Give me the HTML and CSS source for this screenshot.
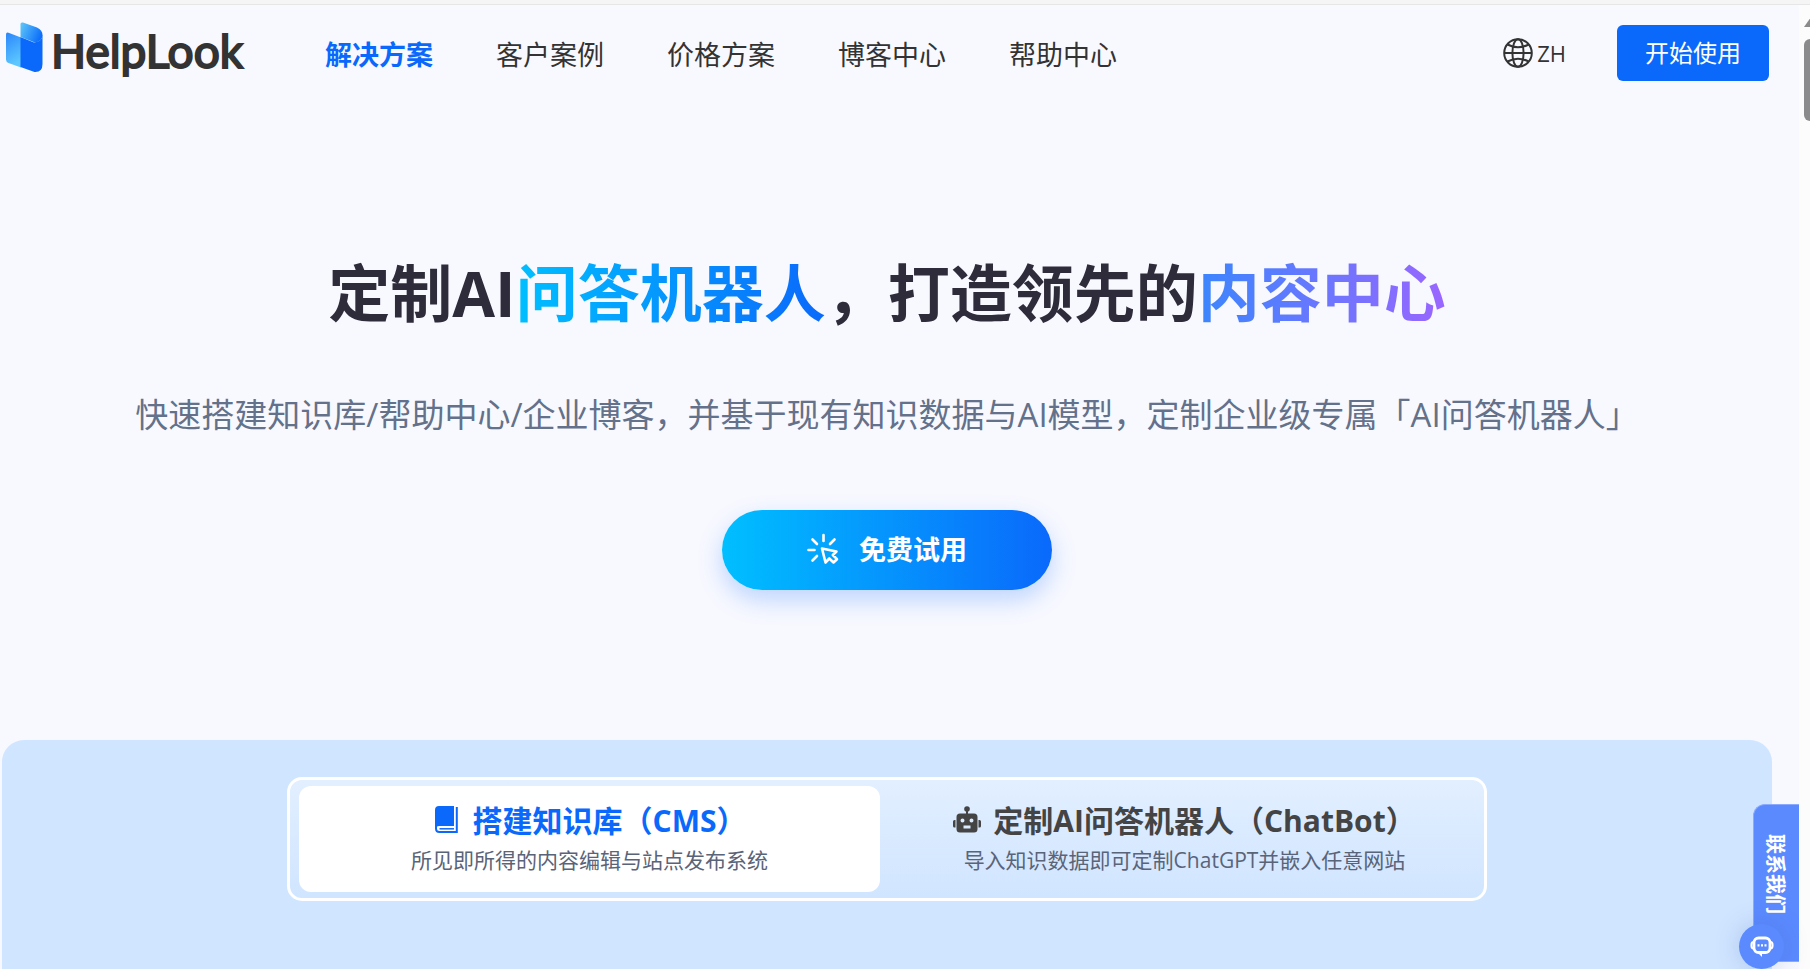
FILE: index.html
```html
<!DOCTYPE html>
<html lang="zh-CN">
<head>
  <meta charset="UTF-8" />
  <meta name="viewport" content="width=device-width, initial-scale=1.0"/>
  <title>HelpLook</title>
  <link rel="stylesheet" href="styles.css">
</head>
<body>

  <div class="top-line"></div>

  <div class="window">
    <div class="page">

      <header class="header">
        <a class="logo" href="#">
          <svg class="logo-icon" viewBox="0 0 37 51" aria-hidden="true">
            <defs>
              <linearGradient id="logoLeft" x1="0" y1="0" x2="0.3" y2="1">
                <stop offset="0" stop-color="#2b86fb"/>
                <stop offset="1" stop-color="#5cc8ff"/>
              </linearGradient>
              <linearGradient id="logoTop" x1="0" y1="0.2" x2="1" y2="0.6">
                <stop offset="0" stop-color="#5cc3f8"/>
                <stop offset="1" stop-color="#0a6cfb"/>
              </linearGradient>
            </defs>
            <path d="M0 12.5 Q0 10 2.5 10.8 L15 15.5 V45.5 L2.5 41 Q0 40 0 37.500 Z" fill="url(#logoLeft)"/>
            <path d="M14.500 15 L28 20.500 Q36.500 20 36.500 12 V42 Q36.500 50.500 28.500 50 L14.500 45 Z" fill="#0a69fb"/>
            <path d="M14.500 2 Q14.500 0 17 .6 L31 5.600 Q36.500 8 36.500 13.500 Q36 19.500 29 20.500 L14.500 15 Z" fill="url(#logoTop)"/>
          </svg>
          <span class="logo-text">HelpLook</span>
        </a>

        <nav class="nav">
          <a class="active" href="#">解决方案</a>
          <a href="#">客户案例</a>
          <a href="#">价格方案</a>
          <a href="#">博客中心</a>
          <a href="#">帮助中心</a>
        </nav>

        <button class="lang" type="button">
          <svg class="lang-icon" viewBox="0 0 30 30" fill="none" stroke="#333" stroke-width="2" aria-hidden="true">
            <circle cx="15" cy="15" r="13.8"/>
            <ellipse cx="15" cy="15" rx="5.600" ry="13.800"/>
            <path d="M1.200 15H28.800M4.500 6.500Q15 12 25.500 6.500M4.500 23.500Q15 18 25.500 23.500"/>
          </svg>
          ZH
        </button>
        <button class="start-btn" type="button">开始使用</button>
      </header>

      <section class="hero">
        <h1>定制AI<span class="blue-text">问答机器人</span>，打造领先的<span class="purple-text">内容中心</span></h1>
        <p>快速搭建知识库/帮助中心/企业博客，并基于现有知识数据与AI模型，定制企业级专属「AI问答机器人」</p>
        <button class="try-btn" type="button">
          <svg class="try-icon" viewBox="0 0 32 32" fill="none" stroke="#fff" stroke-width="2.6" stroke-linecap="round" stroke-linejoin="round" aria-hidden="true">
            <path d="M16.500 2V8M5.500 6.500L10 11M27.500 6.500L23 11M1.500 17H7.500M10 23L5.500 27.500"/>
            <path d="M15 15.500L29.500 18.500L25.800 22L30 26.200L26.500 29.500L22.300 25.500L18.500 29.500Z"/>
          </svg>
          免费试用
        </button>
      </section>

      <section class="panel">
        <div class="tabs" role="tablist">
          <button class="tab selected" type="button" role="tab" aria-selected="true">
            <span class="tab-title">
              <svg class="tab-icon" viewBox="0 0 26 28" fill="currentColor" aria-hidden="true">
                <path d="M5 0H20V20H5Q3 20 1 21.500V4Q1 0 5 0Z"/>
                <path d="M22.800 1V26H5.500Q2 26 2 22.500V20" fill="none" stroke="currentColor" stroke-width="2"/>
                <path d="M5.500 22.800H20" stroke="currentColor" stroke-width="1.500"/>
              </svg>
              搭建知识库（CMS）
            </span>
            <span class="tab-desc">所见即所得的内容编辑与站点发布系统</span>
          </button>
          <button class="tab" type="button" role="tab" aria-selected="false">
            <span class="tab-title">
              <svg class="tab-icon" viewBox="0 0 28 28" fill="currentColor" aria-hidden="true">
                <circle cx="14" cy="3" r="2.800"/>
                <path d="M13 4H15V9H13ZM0 15.500Q0 14 1.500 14H2.500V21.500H1.500Q0 21.500 0 20ZM25.500 14H26.500Q28 14 28 15.500V20Q28 21.500 26.500 21.500H25.500Z"/>
                <path fill-rule="evenodd" d="M7 7.500H21Q24.500 7.500 24.500 11V23Q24.500 26.500 21 26.500H7Q3.500 26.500 3.500 23V11Q3.500 7.500 7 7.500ZM9.500 12.500A2 2 0 1 0 9.500 16.500A2 2 0 1 0 9.500 12.500ZM18.500 12.500A2 2 0 1 0 18.500 16.500A2 2 0 1 0 18.500 12.500ZM10.500 19.500V22.500H17.500V19.500Z"/>
              </svg>
              定制AI问答机器人（ChatBot）
            </span>
            <span class="tab-desc">导入知识数据即可定制ChatGPT并嵌入任意网站</span>
          </button>
        </div>
      </section>

      <!-- floating contact button -->
      <button class="contact" type="button">联系我们</button>
      <button class="chat-bubble" type="button" aria-label="Chat">
        <svg class="chat-icon" viewBox="0 0 24 22" fill="none" stroke="#fff" stroke-width="2.800" aria-hidden="true">
          <rect x="4" y="2" width="16" height="14.500" rx="4.500"/>
          <path d="M3.500 6Q1.400 6 1.400 9.200Q1.400 12.500 3.500 12.500M20.500 6Q22.600 6 22.600 9.200Q22.600 12.500 20.500 12.500" stroke-width="2"/>
          <path d="M8 17H12V21Z" fill="#fff" stroke="none"/>
          <path d="M7.500 9.300H9.500M11 9.300H13M14.500 9.300H16.500" stroke-width="2.200"/>
        </svg>
      </button>
    </div>

    <div class="scrollbar">
      <span class="scroll-arrow"></span>
      <span class="scroll-thumb"></span>
    </div>
  </div>

</body>
</html>
```
FILE: styles.css
```css
* {
  box-sizing: border-box;
}

body {
  margin: 0;
  height: 100vh;
  display: flex;
  flex-direction: column;
  overflow: hidden;
  font-family: 'Open Sans', 'Noto Sans CJK SC', sans-serif;
  background: #f8f9ff;
  color: #333;
}

button {
  font-family: inherit;
  border: none;
  padding: 0;
  cursor: pointer;
}

a {
  color: inherit;
  text-decoration: none;
}

.top-line {
  height: 5px;
  flex: none;
  background: #f5f5f5;
  border-bottom: 1px solid #e6e6e6;
}

.window {
  flex: 1;
  display: flex;
  min-height: 0;
  overflow: hidden;
}

.page {
  position: relative;
  flex: 1;
  display: flex;
  flex-direction: column;
  padding: 0 27px 0 2px;
}

/* header */
.header {
  display: flex;
  align-items: center;
  height: 96px;
  padding: 0 3px 0 4px;
}

.logo {
  display: flex;
  align-items: center;
  gap: 8px;
  width: 319px;
}

.logo-icon {
  width: 37px;
  height: 51px;
  margin-bottom: 12px;
}

.logo-text {
  font-family: Lato, sans-serif;
  font-size: 46px;
  line-height: 56px;
  padding-bottom: 4px;
  color: #333;
  -webkit-text-stroke: 2px #333;
  stroke-linejoin: round;
}

.nav {
  display: flex;
  gap: 63px;
  padding-top: 3px;
  font-size: 27px;
  line-height: 40px;
}

.nav .active {
  color: #0a69fb;
  font-weight: bold;
}

.lang {
  display: flex;
  align-items: center;
  gap: 4px;
  margin-left: auto;
  margin-right: 51px;
  background: none;
  color: #333;
  font-size: 22px;
}

.lang-icon {
  width: 30px;
  height: 30px;
}

.start-btn {
  width: 152px;
  height: 56px;
  padding-bottom: 3px;
  border-radius: 6px;
  background: #0a69fb;
  color: #fff;
  font-size: 24px;
}

/* hero */
.hero {
  display: flex;
  flex-direction: column;
  align-items: center;
  padding-top: 147px;
  padding-bottom: 150px;
}

.hero h1 {
  margin: 0;
  font-size: 62px;
  line-height: 90px;
  color: #2e2b3a;
  white-space: nowrap;
}

.blue-text,
.purple-text {
  background: linear-gradient(90deg, #00bfff, #0a69fb);
  -webkit-background-clip: text;
  background-clip: text;
  color: transparent;
}

.purple-text {
  background-image: linear-gradient(90deg, #3b86fd, #9a66ff);
}

.hero p {
  margin: 52px 0 70px;
  font-size: 33px;
  line-height: 50px;
  color: #64718a;
  white-space: nowrap;
}

.try-btn {
  display: flex;
  align-items: center;
  justify-content: center;
  gap: 20px;
  width: 330px;
  height: 80px;
  padding-bottom: 3px;
  border-radius: 40px;
  background: linear-gradient(90deg, #00bfff, #0a69fb);
  box-shadow: 0 10px 24px rgba(10, 105, 251, 0.25);
  color: #fff;
  font-size: 27px;
  font-weight: bold;
}

.try-icon {
  width: 32px;
  height: 32px;
}

/* tabs */
.panel {
  flex: 1;
  display: flex;
  flex-direction: column;
  align-items: center;
  padding-top: 37px;
  border-radius: 22px 22px 0 0;
  background: #d0e5ff;
}

.tabs {
  display: flex;
  gap: 14px;
  width: 1200px;
  max-width: 100%;
  padding: 6px 9px;
  border: 3px solid #fff;
  border-radius: 15px;
  background: linear-gradient(#e2efff, #d0e5ff);
}

.tab {
  flex: 1;
  display: flex;
  flex-direction: column;
  align-items: center;
  padding: 11px 0 16px;
  border-radius: 12px;
  background: none;
  color: #444;
}

.tab.selected {
  background: #fff;
  color: #0a69fb;
}

.tab-title {
  display: flex;
  align-items: center;
  gap: 12px;
  font-size: 30px;
  line-height: 48px;
  font-weight: bold;
}

.tab-icon {
  width: 28px;
  height: 28px;
  margin-bottom: 3px;
}

.tab-desc {
  font-size: 21px;
  line-height: 31px;
  color: #5a6478;
}

/* contact */
.contact {
  position: absolute;
  right: 0;
  bottom: 7px;
  width: 46px;
  height: 158px;
  padding-bottom: 18px;
  border: 1px solid #8aabff;
  border-right: none;
  border-radius: 12px 0 0 12px;
  background: #5b8aff;
  color: #fff;
  font-size: 20px;
  font-weight: bold;
  writing-mode: vertical-rl;
  text-orientation: sideways;
}

.chat-bubble {
  position: absolute;
  right: 15px;
  bottom: 0;
  display: flex;
  align-items: center;
  justify-content: center;
  width: 45px;
  height: 45px;
  border-radius: 50%;
  background: #5b8aff;
  box-shadow: 0 0 24px rgba(60, 100, 180, 0.25);
}

.chat-icon {
  width: 24px;
  height: 22px;
}

/* scrollbar */
.scrollbar {
  display: flex;
  flex-direction: column;
  align-items: flex-start;
  gap: 12px;
  width: 11px;
  padding: 12px 0 0 5px;
  overflow: hidden;
  background: #fcfcfc;
}

.scroll-arrow {
  flex: none;
  border: 7px solid transparent;
  border-top: none;
  border-bottom: 10px solid #8b8b8b;
}

.scroll-thumb {
  flex: none;
  width: 12px;
  height: 82px;
  border-radius: 6px;
  background: #8b8b8b;
}
```
